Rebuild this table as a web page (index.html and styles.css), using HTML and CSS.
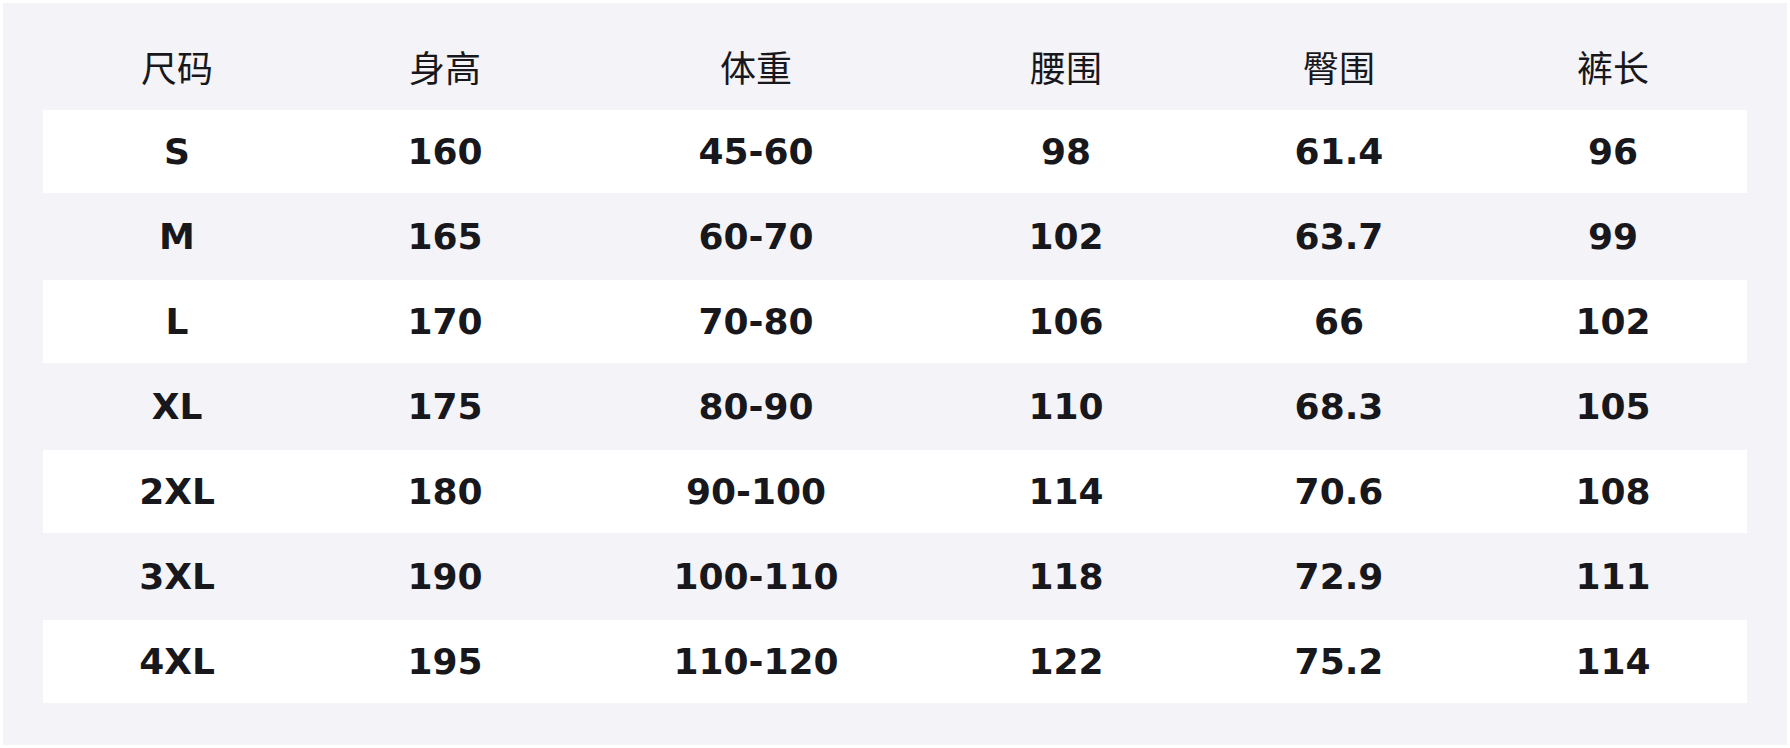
FILE: index.html
```html
<!DOCTYPE html>
<html lang="zh">
<head>
<meta charset="utf-8">
<link rel="stylesheet" href="styles.css">
</head>
<body>
<div class="sheet">
  <div class="row head">
    <div class="cell">尺码</div><div class="cell">身高</div><div class="cell">体重</div><div class="cell">腰围</div><div class="cell">臀围</div><div class="cell">裤长</div>
  </div>
  <div class="row white"><div class="cell">S</div><div class="cell">160</div><div class="cell">45-60</div><div class="cell">98</div><div class="cell">61.4</div><div class="cell">96</div></div>
  <div class="row"><div class="cell">M</div><div class="cell">165</div><div class="cell">60-70</div><div class="cell">102</div><div class="cell">63.7</div><div class="cell">99</div></div>
  <div class="row white"><div class="cell">L</div><div class="cell">170</div><div class="cell">70-80</div><div class="cell">106</div><div class="cell">66</div><div class="cell">102</div></div>
  <div class="row"><div class="cell">XL</div><div class="cell">175</div><div class="cell">80-90</div><div class="cell">110</div><div class="cell">68.3</div><div class="cell">105</div></div>
  <div class="row white"><div class="cell">2XL</div><div class="cell">180</div><div class="cell">90-100</div><div class="cell">114</div><div class="cell">70.6</div><div class="cell">108</div></div>
  <div class="row"><div class="cell">3XL</div><div class="cell">190</div><div class="cell">100-110</div><div class="cell">118</div><div class="cell">72.9</div><div class="cell">111</div></div>
  <div class="row white"><div class="cell">4XL</div><div class="cell">195</div><div class="cell">110-120</div><div class="cell">122</div><div class="cell">75.2</div><div class="cell">114</div></div>
</div>
</body>
</html>
```
FILE: styles.css
```css
html, body {
  margin: 0;
  padding: 0;
  background: #ffffff;
}
body {
  padding: 3px;
  font-family: "DejaVu Sans", "Noto Sans CJK SC", sans-serif;
  color: #17171c;
}
.sheet {
  width: 1784px;
  height: 742px;
  box-sizing: border-box;
  background: #f3f3f8;
  padding: 0 40px 42px 40px;
  display: flex;
  flex-direction: column;
  gap: 2px;
}
.row {
  display: grid;
  grid-template-columns: 268px 268px 354px 266px 280px 268px;
  height: 83px;
}
.row.white {
  background: #ffffff;
}
.cell {
  display: flex;
  align-items: center;
  justify-content: center;
  font-size: 36px;
  font-weight: bold;
  white-space: nowrap;
}
.head {
  height: 105px;
  box-sizing: border-box;
  padding-top: 21px;
}
.head .cell {
  font-family: "Noto Sans CJK SC", sans-serif;
  font-weight: normal;
  font-size: 36px;
  line-height: 1;
}
```
